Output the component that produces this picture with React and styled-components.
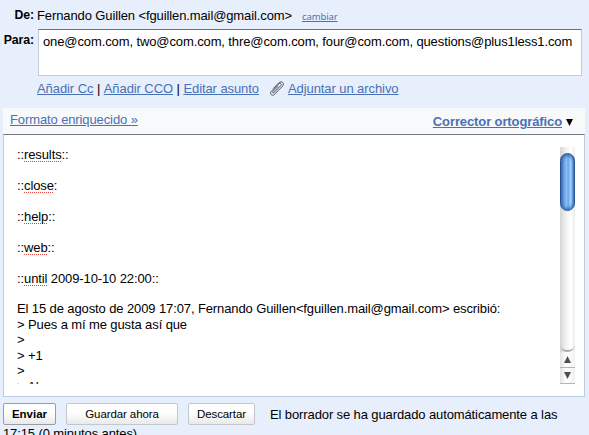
import React from 'react';
import styled, { createGlobalStyle } from 'styled-components';

const Global = createGlobalStyle`
  * { box-sizing: border-box; }
  html, body { margin: 0; overflow: hidden; background: #e7effd; }
  body { font: 13px/15.5px "Liberation Sans", Arial, sans-serif; color: #000; letter-spacing: -0.11px; }
`;
const Page = styled.main`
  width: 589px; height: 435px; overflow: hidden; background: #e7effd; padding-left: 3px;
`;
const Text = styled.span`white-space: pre;`;
const Row = styled.div`display: flex;`;
const Label = styled.label`
  width: 34px; flex: none; font-weight: bold; font-size: 12.3px; padding-right: 3px;
  display: flex; justify-content: flex-end;
`;
const From = styled(Row)`height: 29px; padding-top: 8px;`;
const To = styled(Row)`height: 47px; ${Label} { padding-top: 4px; }`;
const Recipients = styled.div`
  width: 544px; height: 47px; margin-left: 1px; padding: 4px 4px; background: #fff;
  border: 1px solid #c3ccd8; border-top-color: #6d7178;
`;
const Link = styled.a`
  color: #4a70b5; text-decoration: underline; text-underline-offset: 1px; white-space: pre;
  font-weight: ${p => (p.$bold ? 'bold' : 'normal')};
`;
const SmallLink = styled(Link)`font: 9.5px/15px "Noto Sans", sans-serif; margin: 1px 0 0 10px;`;
const Actions = styled(Row)`height: 32px; padding: 5px 0 0 34px; letter-spacing: -0.08px;`;
const Clip = styled.svg`width: 16px; height: 16px; margin: 0 3px 0 10px; flex: none;`;
const Toolbar = styled.div`
  display: flex; justify-content: space-between; width: 582px; height: 26px;
  background: #f8f9fb; padding: 4px 12px 0 7px;
`;
const Spelling = styled.div`display: flex; padding-top: 2px;`;
const Arrow = styled.svg`width: 7px; height: 7px; margin: 5px 0 0 4px;`;
const Editor = styled.section`
  display: flex; justify-content: space-between; width: 582px; height: 263px; background: #fff;
  border: 1px solid #bccbe2; border-top-color: #73777e; padding: 12px 9px 12px 13px;
`;
const Message = styled.div`height: 237px; overflow: hidden;`;
const Line = styled.div`height: 15.45px; white-space: pre;`;
const Misspelled = styled.span`
  text-decoration: underline dotted #e0453c 1px; text-underline-offset: 2px; text-decoration-skip-ink: none;
`;
const Scroll = styled.div`
  width: 15px; height: 237px; display: flex; flex-direction: column;
  background: linear-gradient(90deg, #d5d5d5, #f1f1f1 40%, #fff 70%, #eee);
`;
const Thumb = styled.div`
  height: 58px; margin: 6px 0 0; border: 1px solid #24518f; border-radius: 8px;
  background: linear-gradient(90deg, #3a70bd, #6fa5e8 25%, #8bc0f7 45%, #69a4e8 55%, #a4d6fb 75%, #4f83c4);
  box-shadow: inset 0 2px 3px #3c6eb4, inset 0 -2px 3px #3c78c4;
`;
const Track = styled.div`
  flex: 1; border-bottom: 2px solid #aaa; border-radius: 0 0 8px 8px;
`;
const Step = styled.div`
  height: 16px; display: flex; align-items: center; justify-content: center;
  background: linear-gradient(90deg, #e2e2e2, #fff 40%, #f1f1f1);
  border-bottom: 1px solid #b5b5b5;
`;
const StepIcon = styled.svg`width: 7px; height: 7px;`;
const Footer = styled.footer`display: flex; height: 35px; padding-top: 6px;`;
const Button = styled.button`
  width: ${p => p.$w}px; height: 22px; margin: 0 ${p => p.$gap}px 0 0; padding: 0 0 1px;
  border: 1px solid ${p => (p.$strong ? '#9a9da3' : '#c3c6cc')}; border-radius: 2px;
  background: linear-gradient(#fefefe 45%, #e9e9e9); color: #000;
  font: ${p => (p.$strong ? 'bold 11.5px' : '11.5px')} "Liberation Sans", sans-serif;
  letter-spacing: ${p => p.$track || 0}px;
`;
const Status = styled.div`padding-top: 4px;`;
const StatusEnd = styled.div`margin-top: -6px;`;

const words = [['results', '::'], ['close', ':'], ['help', '::'], ['web', '::'], ['until', ' 2009-10-10 22:00::']];

export default function App() {
  return (
    <Page>
      <Global />
      <From>
        <Label>De:</Label>
        <Text>{'Fernando Guillen <fguillen.mail@gmail.com>'}</Text>
        <SmallLink>cambiar</SmallLink>
      </From>
      <To>
        <Label>Para:</Label>
        <Recipients><Text>one@com.com, two@com.com, thre@com.com, four@com.com, questions@plus1less1.com</Text></Recipients>
      </To>
      <Actions>
        <Link>Añadir Cc</Link><Text> | </Text><Link>Añadir CCO</Link><Text> | </Text><Link>Editar asunto</Link>
        <Clip viewBox="0 0 16 16" fill="none" stroke="#50555c" strokeWidth="1" strokeLinecap="round">
          <path d="M5 11.5 11.6 4.8c1.6-1.7-.5-3.4-2-1.9L2.4 10.3c-2.3 2.5.8 5.4 3.2 3l7.8-8c2.7-2.9-.8-6-3.5-3.5L4.6 7.2M5 11.5c-1 .9-2-.1-1.1-1L9 5.3" />
        </Clip>
        <Link>Adjuntar un archivo</Link>
      </Actions>
      <Toolbar>
        <Link>Formato enriquecido »</Link>
        <Spelling>
          <Link $bold>Corrector ortográfico</Link>
          <Arrow viewBox="0 0 7 7"><path d="M0 0h7L3.5 7z" /></Arrow>
        </Spelling>
      </Toolbar>
      <Editor>
        <Message>
          {words.map(([word, end]) => (
            <React.Fragment key={word}>
              <Line>::<Misspelled>{word}</Misspelled>{end}</Line>
              <Line />
            </React.Fragment>
          ))}
          <Line>{'El 15 de agosto de 2009 17:07, Fernando Guillen<fguillen.mail@gmail.com> escribió:'}</Line>
          <Line>{'> Pues a mí me gusta así que'}</Line>
          <Line>{'>'}</Line>
          <Line>{'> +1'}</Line>
          <Line>{'>'}</Line>
          <Line>{'> Al'}</Line>
        </Message>
        <Scroll>
          <Thumb />
          <Track />
          <Step><StepIcon viewBox="0 0 7 7" fill="#505050"><path d="M0 7h7L3.5 0z" /></StepIcon></Step>
          <Step><StepIcon viewBox="0 0 7 7" fill="#505050"><path d="M0 0h7L3.5 7z" /></StepIcon></Step>
        </Scroll>
      </Editor>
      <Footer>
        <Button $w={53} $gap={10} $strong>Enviar</Button>
        <Button $w={112} $gap={10} $track={-0.1}>Guardar ahora</Button>
        <Button $w={67} $gap={15} $track={-0.1}>Descartar</Button>
        <Status>El borrador se ha guardado automáticamente a las</Status>
      </Footer>
      <StatusEnd>17:15 (0 minutos antes)</StatusEnd>
    </Page>
  );
}
